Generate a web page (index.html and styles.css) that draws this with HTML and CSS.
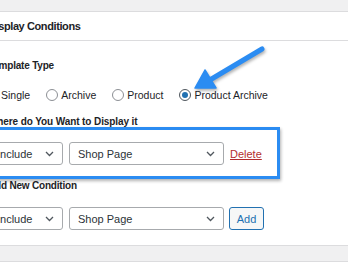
FILE: index.html
```html
<!DOCTYPE html>
<html lang="en">
<head>
    <meta charset="UTF-8">
    <meta name="viewport" content="width=device-width, initial-scale=1.0">
    <title>Display Conditions</title>
    <link rel="stylesheet" href="styles.css">
</head>
<body>
    <div class="top-strip"></div>

    <div class="postbox">
        <h2 class="postbox-title">Display Conditions</h2>

        <div class="postbox-body">
            <div class="field-label">Template Type</div>
            <div class="radio-row">
                <label class="radio"><input type="radio" name="tpl">Single</label>
                <label class="radio"><input type="radio" name="tpl">Archive</label>
                <label class="radio"><input type="radio" name="tpl">Product</label>
                <label class="radio"><input type="radio" name="tpl" checked>Product Archive</label>
            </div>

            <div class="field-label label-where">Where do You Want to Display it</div>
            <div class="highlight">
                <div class="condition-row">
                    <select class="select select-type">
                        <option>Include</option>
                    </select>
                    <select class="select select-page">
                        <option>Shop Page</option>
                    </select>
                    <a href="#" class="delete-link">Delete</a>
                </div>
            </div>

            <div class="field-label label-add">Add New Condition</div>
            <div class="condition-row row-new">
                <select class="select select-type">
                    <option>Include</option>
                </select>
                <select class="select select-page">
                    <option>Shop Page</option>
                </select>
                <button class="add-button">Add</button>
            </div>
        </div>
    </div>

    <div class="next-gap"></div>
    <div class="next-box"></div>

    <!-- annotation arrow -->
    <svg class="arrow" width="348" height="268" viewBox="0 0 348 268">
        <line x1="262" y1="49" x2="209" y2="80.5" stroke="#2b8cf2" stroke-width="5" stroke-linecap="round"/>
        <polygon points="195,88 216,88 205,70" fill="#2b8cf2" stroke="#2b8cf2" stroke-width="1.5" stroke-linejoin="round"/>
    </svg>
</body>
</html>
```

FILE: styles.css
```css
html, body {
    margin: 0;
    padding: 0;
}
body {
    font-family: "Liberation Sans", Arial, sans-serif;
    color: #1d2327;
    background-color: #fff;
    width: 348px;
    height: 268px;
    overflow: hidden;
    position: relative;
}
.top-strip {
    height: 11px;
    background-color: #f0f0f1;
    border-bottom: 1px solid #dcdcde;
}
.postbox {
    margin-left: -24px;
    background-color: #fff;
    border-bottom: 1px solid #dcdcde;
}
.postbox-title {
    margin: 0;
    height: 28px;
    line-height: 28px;
    padding-left: 12px;
    font-size: 11px;
    font-weight: bold;
    letter-spacing: -0.4px;
    border-bottom: 1px solid #dcdcde;
}
.postbox-body {
    padding: 19px 12px 15px 12px;
}
.field-label {
    font-size: 10px;
    font-weight: bold;
    line-height: 12px;
    letter-spacing: -0.2px;
}
.radio-row {
    display: flex;
    align-items: center;
    height: 14px;
    margin: 16px 0 0 -2px;
}
.radio {
    display: flex;
    align-items: center;
    font-size: 10.5px;
    margin-right: 16px;
}
.radio input {
    appearance: none;
    -webkit-appearance: none;
    box-sizing: border-box;
    width: 12px;
    height: 12px;
    margin: 0 3px 0 0;
    border: 1px solid #8c8f94;
    border-radius: 50%;
    background-color: #fff;
    display: flex;
    align-items: center;
    justify-content: center;
}
.radio input:checked {
    border-color: #50575e;
}
.radio input:checked::before {
    content: "";
    width: 6px;
    height: 6px;
    border-radius: 50%;
    background-color: #2271b1;
}
.label-where {
    margin-top: 14px;
    letter-spacing: -0.1px;
}
.highlight {
    display: inline-block;
    margin: -1px 0 0 -15px;
    padding: 12px 15px 11px 12px;
    border: 3px solid #2b8cf2;
    box-shadow: 1px 2px 3px rgba(0, 0, 0, 0.3);
}
.condition-row {
    display: flex;
    align-items: center;
    gap: 6px;
}
.select {
    appearance: none;
    -webkit-appearance: none;
    height: 23px;
    margin: 0;
    padding: 0 20px 0 8px;
    font-family: inherit;
    font-size: 11px;
    color: #2c3338;
    border: 1px solid #a7aaad;
    border-radius: 3px;
    background-color: #fff;
    background-image: url("data:image/svg+xml,%3Csvg xmlns='http://www.w3.org/2000/svg' width='9' height='6' viewBox='0 0 9 6'%3E%3Cpath d='M1 1l3.5 3.5L8 1' fill='none' stroke='%2350575e' stroke-width='1.3'/%3E%3C/svg%3E");
    background-repeat: no-repeat;
    background-position: right 8px center;
}
.select-type {
    width: 75px;
}
.select-page {
    width: 155px;
}
.delete-link {
    font-size: 11px;
    color: #b32d2e;
    text-decoration: underline;
}
.label-add {
    margin-top: 1px;
}
.row-new {
    margin-top: 15px;
}
.add-button {
    height: 23px;
    width: 35px;
    margin-left: -1px;
    padding: 0;
    font-family: inherit;
    font-size: 11px;
    color: #2271b1;
    background-color: #f6f7f7;
    border: 1px solid #2271b1;
    border-radius: 3px;
}
.next-gap {
    height: 15px;
    background-color: #f0f0f1;
    border-bottom: 1px solid #dcdcde;
}
.next-box {
    height: 6px;
    background-color: #fff;
}
.arrow {
    position: absolute;
    top: 0;
    left: 0;
    pointer-events: none;
    filter: drop-shadow(1px 2px 1.5px rgba(0, 0, 0, 0.3));
}
```
